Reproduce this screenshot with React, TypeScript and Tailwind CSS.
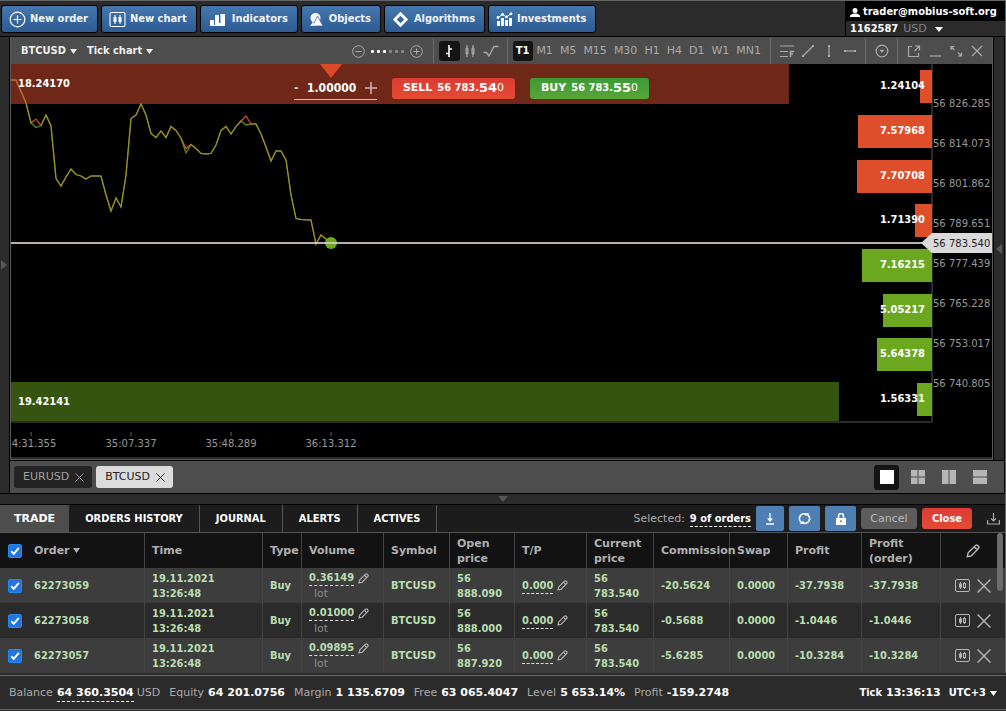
import { useState } from "react";
import type { ReactNode } from "react";
import clsx from "clsx";

interface Order {
  id: string;
  date: string;
  time: string;
  volume: string;
  open: string;
  commission: string;
  profit: string;
}

const orders: Order[] = [
  { id: "62273059", date: "19.11.2021", time: "13:26:48", volume: "0.36149", open: "888.090", commission: "-20.5624", profit: "-37.7938" },
  { id: "62273058", date: "19.11.2021", time: "13:26:48", volume: "0.01000", open: "888.000", commission: "-0.5688", profit: "-1.0446" },
  { id: "62273057", date: "19.11.2021", time: "13:26:48", volume: "0.09895", open: "887.920", commission: "-5.6285", profit: "-10.3284" },
];

const timeframes = ["T1", "M1", "M5", "M15", "M30", "H1", "H4", "D1", "W1", "MN1"];
const tabs = ["TRADE", "ORDERS HISTORY", "JOURNAL", "ALERTS", "ACTIVES"];

const priceLabels = ["56 826.285", "56 814.073", "56 801.862", "56 789.651", "56 777.439", "56 765.228", "56 753.017", "56 740.805"];
const timeLabels = [
  { tick: 30, x: 34, text: "4:31.355" },
  { tick: 130, x: 131, text: "35:07.337" },
  { tick: 230, x: 231, text: "35:48.289" },
  { tick: 330, x: 331, text: "36:13.312" },
];

const depth = [
  { y: 70, x: 920, value: "1.24104", side: "sell" },
  { y: 115, x: 858, value: "7.57968", side: "sell" },
  { y: 160, x: 857, value: "7.70708", side: "sell" },
  { y: 204, x: 915, value: "1.71390", side: "sell" },
  { y: 249, x: 862, value: "7.16215", side: "buy" },
  { y: 294, x: 883, value: "5.05217", side: "buy" },
  { y: 338, x: 877, value: "5.64378", side: "buy" },
  { y: 383, x: 917, value: "1.56331", side: "buy" },
];

const bid =
  "11,80 16,80 26,103 31,123 36,127.5 41,125.5 46,115 51,126 56,178.5 61,186 66,177 71,169 76,174.5 81,176 86,179 91,176 101,176 106,195 111,211 116,198 121,207 126,175 131,118.5 136,115 141,104 146,115 151,133.5 156,137.5 161,131 166,137.5 171,126.5 176,130.5 181,138 186,153 191,144.5 196,148.5 201,153.5 206,154 211,153.5 216,145 221,130.5 226,126.5 231,134 236,126.5 241,121 246,125 251,124 256,124 261,134 266,147 271,161 276,151 281,151 286,160 291,195 296,218.5 301,219.5 311,220 316,244 321,235 326,239 331,243";
const ask = bid.replace("36,127.5", "36,119").replace("186,153", "186,148.5").replace("246,125", "246,116");

const semi = "font-['DejaVu_Sans_Condensed','DejaVu_Sans',sans-serif] font-bold";

function Caret({ className = "" }: { className?: string }) {
  return (
    <svg width="7" height="5" viewBox="0 0 7 5" className={className} fill="currentColor" aria-hidden="true">
      <path d="M0 0h7L3.500 5z" />
    </svg>
  );
}

function Pencil({ size = 11 }: { size?: number }) {
  return (
    <svg width={size} height={size} viewBox="0 0 12 12" fill="none" stroke="#b5b5b5" strokeWidth="1.2" strokeLinejoin="round">
      <path d="M1 11l.9-3.500L8.200 1.300q.9-.8 1.800 0l.7.7q.8.900 0 1.800L4.500 10.100zM7.300 2.700l2 2" />
    </svg>
  );
}

function Cross({ size = 10 }: { size?: number }) {
  return (
    <svg width={size} height={size} viewBox="0 0 12 12" fill="none" stroke="currentColor" strokeWidth="1.2">
      <path d="M.5.5l11 11M11.500.5l-11 11" />
    </svg>
  );
}

function ChartIcon() {
  return (
    <svg width="15" height="15" viewBox="0 0 15 15" fill="none" stroke="#b5b5b5">
      <rect x="0.500" y="1.500" width="14" height="12" rx="1.500" />
      <path d="M5.500 4v7M9.500 4v7" />
      <rect x="4" y="5.500" width="3" height="4" fill="#b5b5b5" stroke="none" />
      <rect x="8.500" y="5.500" width="2" height="4" fill="#454545" />
    </svg>
  );
}

const mainButtons: { label: string; icon: ReactNode }[] = [
  {
    label: "New order",
    icon: (
      <svg width="17" height="17" viewBox="0 0 17 17" fill="none" stroke="#fff" strokeWidth="1.200">
        <circle cx="8.500" cy="8.500" r="7.300" />
        <path d="M8.500 4.500v8M4.500 8.500h8" />
      </svg>
    ),
  },
  {
    label: "New chart",
    icon: (
      <svg width="17" height="17" viewBox="0 0 17 17" fill="none" stroke="#fff" strokeWidth="1.100">
        <rect x="1" y="1.500" width="15" height="14" rx="1.500" />
        <path d="M6 4v9M11 4v9" />
        <rect x="4.500" y="6" width="3" height="5" fill="#fff" stroke="none" />
        <rect x="9.500" y="6" width="3" height="5" fill="#fff" stroke="none" />
      </svg>
    ),
  },
  {
    label: "Indicators",
    icon: (
      <svg width="20" height="17" viewBox="0 0 20 17" fill="#fff">
        <path d="M2 9h4v6H2zM7 4h4v11H7zM12.500 3H17v12h-4.500z" />
        <path d="M2 14h15v1H2zM11 12h2v3h-2z" />
      </svg>
    ),
  },
  {
    label: "Objects",
    icon: (
      <svg width="16" height="17" viewBox="0 0 16 17" fill="#fff">
        <circle cx="6.500" cy="7" r="5" />
        <path d="M8.500 5L14 15H3.500z" stroke="#3a6ba3" strokeWidth="0.800" />
        <path d="M1 14.800L4 11l2 3.800z" />
      </svg>
    ),
  },
  {
    label: "Algorithms",
    icon: (
      <svg width="18" height="17" viewBox="0 0 18 17" fill="none" stroke="#fff" strokeWidth="2.800">
        <path d="M8.500 2.800l5.700 5.700-5.700 5.700-5.700-5.700z" />
      </svg>
    ),
  },
  {
    label: "Investments",
    icon: (
      <svg width="17" height="17" viewBox="0 0 17 17" fill="#fff">
        <path d="M1 10h3v5H1zM5 7h3v8H5zM9 9h3v6H9zM13 7h3v8h-3z" />
        <path d="M2 6.500L6.500 3.500l4 2.500L15 2.800" fill="none" stroke="#fff" />
        <circle cx="2" cy="6.500" r="1.400" />
        <circle cx="6.500" cy="3.500" r="1.400" />
        <circle cx="10.500" cy="6" r="1.400" />
        <circle cx="15" cy="2.800" r="1.400" />
      </svg>
    ),
  },
];

function ToolButton({ label, active, children }: { label: string; active?: boolean; children: ReactNode }) {
  return (
    <button
      aria-label={label}
      className={clsx("flex h-5 w-[21px] items-center justify-center rounded-[3px]", active && "bg-[#141414]")}
    >
      <svg width="16" height="16" viewBox="0 0 16 16" fill="none" stroke={active ? "#fff" : "#aaa"} strokeWidth="1.2">
        {children}
      </svg>
    </button>
  );
}

function Separator() {
  return <span className="mx-[5px] h-[26px] w-px bg-[#6a6a6a]" />;
}

function TopBar() {
  return (
    <header className="flex h-9 items-start justify-between border-b border-black">
      <nav className={clsx("flex gap-[3px] pl-px pt-1", semi)}>
        {mainButtons.map((b) => (
          <button
            key={b.label}
            className="flex h-7 items-center gap-1 rounded-[3px] border border-black bg-linear-to-b from-[#4577ae] to-[#2d5b94] pl-[7px] pr-[9px] text-[#f4f4f4]"
          >
            {b.icon}
            {b.label}
          </button>
        ))}
      </nav>
      <div className="w-40 self-stretch border-l border-black text-white">
        <div className={clsx("flex h-5 items-center gap-[3px] bg-black pl-[4px] pt-[2px]", semi)}>
          <svg width="10" height="9" viewBox="0 0 10 9" fill="#fff">
            <circle cx="5" cy="2.500" r="2.500" />
            <path d="M0 9V7.500C1 6 2.800 6 3.500 5.500h3C7.200 6 9 6 10 7.500V9z" />
          </svg>
          trader@mobius-soft.org
        </div>
        <button className="flex h-[15px] items-center pl-[4px] pt-[2px]">
          <span className={semi}>1162587</span>
          <span className="pl-[5px] text-[#858585]">USD</span>
          <svg width="8" height="5" viewBox="0 0 8 5" className="ml-2" fill="#fff">
            <path d="M0 0h8L4 5z" />
          </svg>
        </button>
      </div>
    </header>
  );
}

function ChartToolbar() {
  const [frame, setFrame] = useState("T1");
  return (
    <div className="flex h-[27px] items-center bg-[#4d4d4d] pl-[10px] pr-[5px] text-[#aaa]">
      <button className={clsx("flex items-center gap-1 pt-[2px] text-[#eee]", semi)}>
        BTCUSD <Caret />
      </button>
      <button className={clsx("ml-[10px] flex items-center gap-1 pt-[2px] text-[#eee]", semi)}>
        Tick chart <Caret />
      </button>
      <div className="ml-auto flex items-center pt-px">
        <button aria-label="Zoom out">
          <svg width="13" height="13" viewBox="0 0 13 13" fill="none" stroke="#aaa">
            <circle cx="6.500" cy="6.500" r="5.800" />
            <path d="M3.500 6.500h6" />
          </svg>
        </button>
        <span className="mx-[6px] flex gap-[3px]">
          {[0, 1, 2, 3, 4, 5].map((i) => (
            <span key={i} className={clsx("size-[3px] rounded-[1px]", i < 3 ? "bg-white" : "bg-[#8a8a8a]")} />
          ))}
        </span>
        <button aria-label="Zoom in" className="mr-[5px]">
          <svg width="13" height="13" viewBox="0 0 13 13" fill="none" stroke="#aaa">
            <circle cx="6.500" cy="6.500" r="5.800" />
            <path d="M3.500 6.500h6M6.500 3.500v6" />
          </svg>
        </button>
        <Separator />
        <ToolButton label="Bars" active>
          <path d="M8 2v12M5 10.500h3M8 6h3" strokeWidth="1.600" />
        </ToolButton>
        <ToolButton label="Candles">
          <path d="M5 2v12M11 2v12" />
          <path d="M4 5h2v6H4zM10 5h2v6h-2z" fill="#8a8a8a" strokeWidth="1" />
        </ToolButton>
        <ToolButton label="Line">
          <path d="M.5 9.500h3L6 13l5-9.500h4.500" strokeWidth="1.300" />
        </ToolButton>
        <Separator />
        {timeframes.map((t) => (
          <button
            key={t}
            onClick={() => setFrame(t)}
            className={clsx("h-5 rounded-[3px] pl-[3px] pr-1", t === frame && "bg-[#141414] text-white", t === frame && semi)}
          >
            {t}
          </button>
        ))}
        <Separator />
        <ToolButton label="Fibonacci">
          <path d="M1 3h14M1 8.500h8M1 13.500h8" />
          <path d="M11.500 14V8.500H15M11.500 11H14" strokeWidth="1.500" />
        </ToolButton>
        <ToolButton label="Trend line">
          <path d="M3.500 12.500l9-9" />
          <path d="M2 12h2v2H2zM12 2h2v2h-2z" fill="#aaa" stroke="none" />
        </ToolButton>
        <ToolButton label="Vertical line">
          <path d="M8 3v10" />
          <path d="M7 2h2v2H7zM7 12h2v2H7z" fill="#aaa" stroke="none" />
        </ToolButton>
        <ToolButton label="Horizontal line">
          <path d="M2 8h12" />
          <path d="M2 7h2v2H2zM12 7h2v2h-2z" fill="#aaa" stroke="none" />
        </ToolButton>
        <Separator />
        <ToolButton label="Options">
          <circle cx="8" cy="8" r="5.800" />
          <path d="M5.500 6.700h5L8 10z" fill="#aaa" stroke="none" />
        </ToolButton>
        <Separator />
        <ToolButton label="Detach">
          <path d="M6 3.500H2.500v10h10V10M9 3h4.500v4.500M8.500 8l4.500-4.500" />
        </ToolButton>
        <ToolButton label="Minimize">
          <path d="M3 13h11" />
        </ToolButton>
        <ToolButton label="Maximize">
          <path d="M3 7V3.500h3.500M3 3.500l3.500 3.500M13.500 9.500V13H10M13.500 13L10 9.500" />
        </ToolButton>
        <ToolButton label="Close chart">
          <path d="M3 3l10 10M13 3L3 13" />
        </ToolButton>
      </div>
    </div>
  );
}

function Chart() {
  return (
    <div className="relative border-b-2 border-[#2b2b2b] bg-black">
      <svg viewBox="11 64 981 393" className="block w-full" role="img" aria-label="BTCUSD tick chart">
        <polyline points={ask} fill="none" stroke="#e04a26" strokeWidth="1.2" />
        <polyline points={bid} fill="none" stroke="#74ac20" strokeOpacity="0.8" strokeWidth="1.3" />
        <rect x="11" y="64" width="778" height="40" fill="#dd4f2d" fillOpacity="0.5" />
        <rect x="11" y="382" width="828" height="40" fill="#6aa81e" fillOpacity="0.5" />
        <path d="M11 422H932V64" fill="none" stroke="#2a2a2a" strokeWidth="2" />
        <path d="M320 64h22l-11 14z" fill="#dd4a28" />
        <circle cx="331" cy="243" r="6" fill="#6aa820" />
        <rect x="11" y="242" width="912" height="2" fill="#d8d0c8" fillOpacity="0.85" />
        {depth.map((d) => (
          <rect key={d.value} x={d.x} y={d.y} width={932 - d.x} height="33" fill={d.side === "sell" ? "#de4e2b" : "#6ba820"} />
        ))}
        <g className={semi} fontSize="11" fill="#fff">
          {depth.map((d) => (
            <text key={d.value} x="925" y={d.y + 19} textAnchor="end">
              {d.value}
            </text>
          ))}
          <text x="18" y="87">18.24170</text>
          <text x="18" y="405">19.42141</text>
        </g>
        <g fontSize="10" fill="#999">
          {priceLabels.map((p, i) => (
            <text key={p} x="933" y={107 + i * 40}>
              {p}
            </text>
          ))}
          {timeLabels.map((t) => (
            <g key={t.text}>
              <rect x={t.tick} y="432" width="2" height="4" fill="#333" />
              <text x={t.x} y="447" textAnchor="middle">
                {t.text}
              </text>
            </g>
          ))}
        </g>
        <path d="M921 243l11-10h60v20h-60z" fill="#dadada" />
        <text x="933" y="247" fontSize="10" fill="#222">
          56 783.540
        </text>
      </svg>
      <div className="absolute left-[283px] top-[12px] flex items-center text-white">
        <div className={clsx("flex h-6 items-center border-b border-[#cfb8b2] text-xs", semi)}>
          <button aria-label="Decrease volume" className="w-[10px] text-left text-[#ccc]">-</button>
          <input
            aria-label="Volume"
            defaultValue="1.00000"
            className="w-[58px] bg-transparent pl-[3px] outline-none"
          />
          <button aria-label="Increase volume" className="flex w-[15px] justify-end">
            <svg width="12" height="12" viewBox="0 0 12 12" stroke="#ccb5b0" strokeWidth="1.500">
              <path d="M6 0v12M0 6h12" />
            </svg>
          </button>
        </div>
        <button className="ml-[15px] flex h-[21px] w-[123px] items-center justify-center rounded-[3px] bg-linear-to-b from-[#dc3b34] to-[#e44a33]">
          <b className="mr-[5px]">SELL</b>
          <span className={semi}>56 783.</span>
          <b className="text-[13px]">54</b>0
        </button>
        <button className="ml-[15px] flex h-[21px] w-[119px] items-center justify-center rounded-[3px] bg-linear-to-b from-[#3c9a35] to-[#58a538]">
          <b className="mr-[5px]">BUY</b>
          <span className={semi}>56 783.</span>
          <b className="text-[13px]">55</b>0
        </button>
      </div>
    </div>
  );
}

function ChartTabs() {
  const layouts = [
    { label: "Single", d: "M0 0h14v14H0z" },
    { label: "Grid", d: "M0 0h6.500v6.500H0zM7.500 0H14v6.500H7.500zM0 7.500h6.500V14H0zM7.500 7.500H14V14H7.500z" },
    { label: "Columns", d: "M0 0h6.500v14H0zM7.500 0H14v14H7.500z" },
    { label: "Rows", d: "M0 0h14v6.500H0zM0 7.500h14V14H0z" },
  ];
  return (
    <div className="flex h-8 items-center justify-between bg-[#4d4d4d] pl-1 pr-3">
      <div className="flex gap-1">
        <button className="flex h-[22px] items-center gap-[6px] rounded-[3px] bg-[#242424] pl-[9px] pr-2 text-[#a0a0a0]">
          EURUSD <Cross size={9} />
        </button>
        <button className="flex h-[22px] items-center gap-[6px] rounded-[3px] bg-[#dcdcdc] pl-[9px] pr-2 text-[#222]">
          BTCUSD <Cross size={9} />
        </button>
      </div>
      <div className="flex gap-[6px]">
        {layouts.map((l, i) => (
          <button
            key={l.label}
            aria-label={l.label}
            className={clsx("flex size-[25px] items-center justify-center rounded-[3px]", i === 0 ? "bg-[#141414] text-white" : "text-[#b5b5b5]")}
          >
            <svg width="14" height="14" viewBox="0 0 14 14" fill="currentColor">
              <path d={l.d} />
            </svg>
          </button>
        ))}
      </div>
    </div>
  );
}

const actionButton = "flex h-[25px] items-center justify-center rounded-[2px] bg-[#4f7fb2]";

function OrderTabs() {
  return (
    <div className="flex h-7 items-center justify-between border-b border-[#555] bg-[#1c1c1c] text-white">
      <div role="tablist" className="flex h-full">
        {tabs.map((t, i) => (
          <button
            key={t}
            role="tab"
            aria-selected={i === 0}
            className={clsx("h-full pt-[2px]", i === 0 ? "bg-[#4d4d4d] px-[14px] font-bold" : "border-r border-[#555] px-4", i > 0 && semi)}
          >
            {t}
          </button>
        ))}
      </div>
      <div className="flex items-center gap-[5px] pr-[5px]">
        <span className="pt-[2px] text-[#aaa]">Selected:</span>
        <a href="#orders" className={clsx("border-b border-dashed border-white pt-[2px] leading-[14px]", semi)}>
          9 of orders
        </a>
        <button aria-label="Export selected" className={clsx(actionButton, "w-7")}>
          <svg width="12" height="12" viewBox="0 0 12 12" fill="none" stroke="#fff" strokeWidth="1.300">
            <path d="M6 0v8M2 11h8" />
            <path d="M3 5.500h6L6 9z" fill="#fff" stroke="none" />
          </svg>
        </button>
        <button aria-label="Reverse selected" className={clsx(actionButton, "w-[31px]")}>
          <svg width="13" height="13" viewBox="0 0 13 13" fill="none" stroke="#fff" strokeWidth="1.700">
            <path d="M4.200 10.700A4.600 4.600 0 0 1 8 2.200M8.800 2.300A4.600 4.600 0 0 1 5 10.900" />
            <path d="M1.500 11.800h4V8.800zM11.500 1.200h-4v3z" fill="#fff" stroke="none" />
          </svg>
        </button>
        <button aria-label="Lock selected" className={clsx(actionButton, "w-[31px]")}>
          <svg width="10" height="12" viewBox="0 0 10 12" fill="#fff">
            <path d="M0 5h10v7H0z" />
            <path d="M2.500 5V3a2.500 2.500 0 0 1 5 0v2" fill="none" stroke="#fff" strokeWidth="1.500" />
            <circle cx="5" cy="8.200" r="1" fill="#4f7fb2" />
          </svg>
        </button>
        <button className="h-[21px] w-14 rounded-[3px] bg-[#5c5c5c] pt-px text-[#bbb]">Cancel</button>
        <button className={clsx("h-[21px] w-[50px] rounded-[3px] bg-linear-to-b from-[#dc3b34] to-[#e44a33] pt-px", semi)}>Close</button>
        <button aria-label="Download" className="ml-[10px]">
          <svg width="13" height="13" viewBox="0 0 13 13" fill="none" stroke="#aaa" strokeWidth="1.200">
            <path d="M.6 8v4h11.800V8M6.500 1v8M4 6.500L6.500 9 9 6.500" />
          </svg>
        </button>
      </div>
    </div>
  );
}

function Check({ label }: { label: string }) {
  return (
    <label className="relative block size-[14px]">
      <input type="checkbox" defaultChecked aria-label={label} className="peer block size-[14px] appearance-none rounded-[2px] border border-[#1e8bf0] checked:bg-[#2673dd]" />
      <svg viewBox="0 0 14 14" className="pointer-events-none absolute inset-0 hidden size-[14px] peer-checked:block" fill="none" stroke="#fff" strokeWidth="1.900">
        <path d="M3.200 7.200l2.600 2.700 5-6" />
      </svg>
    </label>
  );
}

const th = "border-r border-[#444] pl-[7px] pr-2 text-left leading-[15px]";
const td = "border-r border-[#444] pl-[7px] pr-2";

function OrdersTable() {
  return (
    <div className="relative">
      <table className="w-full table-fixed border-separate border-spacing-0">
        <colgroup>
          <col className="w-[27px]" />
          <col className="w-[118px]" />
          <col className="w-[118px]" />
          <col className="w-[39px]" />
          <col className="w-[82px]" />
          <col className="w-[66px]" />
          <col className="w-[65px]" />
          <col className="w-[72px]" />
          <col className="w-[67px]" />
          <col className="w-[76px]" />
          <col className="w-[58px]" />
          <col className="w-[74px]" />
          <col className="w-[79px]" />
          <col />
        </colgroup>
        <thead className="text-[#b0b0b0]">
          <tr className="h-[35px] bg-[#121212]">
            <th className="pl-2"><Check label="Select all orders" /></th>
            <th className={th}>
              <span className="flex items-center gap-[3px]">Order <Caret /></span>
            </th>
            <th className={th}>Time</th>
            <th className={th}>Type</th>
            <th className={th}>Volume</th>
            <th className={th}>Symbol</th>
            <th className={th}>Open price</th>
            <th className={th}>T/P</th>
            <th className={th}>Current price</th>
            <th className={th}>Commission</th>
            <th className={th}>Swap</th>
            <th className={th}>Profit</th>
            <th className={th}>Profit (order)</th>
            <th>
              <button aria-label="Edit columns" className="flex w-full justify-center"><Pencil size={14} /></button>
            </th>
          </tr>
        </thead>
        <tbody className={clsx("leading-[15px] text-[#b9deb0]", semi)}>
          {orders.map((o) => (
            <tr key={o.id} className="h-[35px] odd:bg-[#3d3d3d] even:bg-[#2b2b2b]">
              <td className="pl-2"><Check label={`Select order ${o.id}`} /></td>
              <td className={td}>{o.id}</td>
              <td className={td}>{o.date}<br />{o.time}</td>
              <td className={td}>Buy</td>
              <td className={td}>
                <button className="flex items-center gap-1">
                  <span className="border-b border-dashed border-[#ddd] leading-[14px]">{o.volume}</span>
                  <Pencil />
                </button>
                <span className="block pl-[5px] font-['DejaVu_Sans',sans-serif] font-normal text-[#8a8a8a]">lot</span>
              </td>
              <td className={td}>BTCUSD</td>
              <td className={td}>56<br />{o.open}</td>
              <td className={td}>
                <button className="flex items-center gap-1">
                  <span className="border-b border-dashed border-[#ddd]">0.000</span>
                  <Pencil />
                </button>
              </td>
              <td className={td}>56<br />783.540</td>
              <td className={td}>{o.commission}</td>
              <td className={td}>0.0000</td>
              <td className={td}>{o.profit}</td>
              <td className={td}>{o.profit}</td>
              <td>
                <span className="flex items-center gap-[7px] pl-[14px] text-[#b5b5b5]">
                  <button aria-label="Open chart"><ChartIcon /></button>
                  <button aria-label="Close order"><Cross size={14} /></button>
                </span>
              </td>
            </tr>
          ))}
        </tbody>
      </table>
      <span className="absolute right-[2px] top-0 h-[58px] w-[6px] rounded-sm bg-[#6c6c6c]" />
    </div>
  );
}

function StatusBar() {
  const items = [
    { label: "Equity", value: "64 201.0756" },
    { label: "Margin", value: "1 135.6709" },
    { label: "Free", value: "63 065.4047" },
    { label: "Level", value: "5 653.14%" },
    { label: "Profit", value: "-159.2748" },
  ];
  return (
    <footer className="flex h-[35px] items-center border-y border-[#666] bg-[#2b2b2b] pl-[9px] pr-[9px] pt-[2px] text-[#aaa]">
      <div className="flex gap-[9px]">
        <span className="flex">
          Balance
          <b className="ml-1 mr-[3px] border-b border-dashed border-white text-white">64 360.3504</b>
          USD
        </span>
        {items.map((i) => (
          <span key={i.label} className="flex gap-1">
            {i.label}
            <b className="text-white">{i.value}</b>
          </span>
        ))}
      </div>
      <div className="ml-auto flex items-center gap-1 text-white">
        <span className={semi}>Tick</span>
        <b>13:36:13</b>
        <button className={clsx("ml-1 flex items-center gap-1", semi)}>
          UTC+3 <Caret />
        </button>
      </div>
    </footer>
  );
}

export default function App() {
  return (
    <div className="min-h-screen bg-[#2b2b2b] font-['DejaVu_Sans',sans-serif] text-[11px]">
      <div className="border-r border-t border-[#666]">
        <TopBar />
        <main className="flex border-r border-black">
          <aside className="flex w-[10px] items-center border-r border-black text-[#555]">
            <svg width="7" height="10" viewBox="0 0 7 10" fill="currentColor">
              <path d="M1 0v10l6-5z" />
            </svg>
          </aside>
          <div className="min-w-0 flex-1">
            <div className="flex border-b border-black">
              <div className="min-w-0 flex-1 border-b border-l border-r border-[#5a5a5a]">
                <ChartToolbar />
                <Chart />
              </div>
              <aside className="flex w-[11px] items-center justify-center border-l border-black text-[#555]">
                <svg width="6" height="10" viewBox="0 0 6 10" fill="currentColor">
                  <path d="M6 0v10L0 5z" />
                </svg>
              </aside>
            </div>
            <ChartTabs />
          </div>
        </main>
        <div className="flex h-3 items-center justify-center border-y border-black">
          <svg width="10" height="6" viewBox="0 0 10 6" fill="#555">
            <path d="M0 0h10L5 6z" />
          </svg>
        </div>
        <OrderTabs />
        <OrdersTable />
      </div>
      <div className="h-[2px]" />
      <StatusBar />
    </div>
  );
}
